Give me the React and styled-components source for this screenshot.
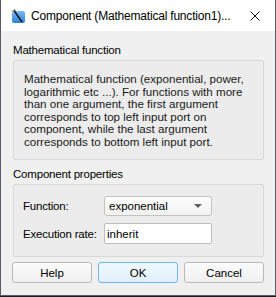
import React from "react";
import styled, { createGlobalStyle } from "styled-components";

const GlobalStyle = createGlobalStyle`
  html, body {
    margin: 0;
    padding: 0;
    background: #1b1b1f;
  }
  body {
    font-family: "Liberation Sans", Arial, sans-serif;
  }
`;

const description = [
  "Mathematical function (exponential, power,",
  "logarithmic etc ...). For functions with more",
  "than one argument, the first argument",
  "corresponds to top left input port on",
  "component, while the last argument",
  "corresponds to bottom left input port.",
];

function AppIcon() {
  return (
    <svg width="16" height="16" viewBox="0 0 16 16">
      <defs>
        <linearGradient id="iconBlue" x1="0" y1="0" x2="0" y2="1">
          <stop offset="0" stopColor="#7ab8f5" />
          <stop offset="1" stopColor="#2f7fd8" />
        </linearGradient>
      </defs>
      <rect x="2" y="3" width="13" height="12" rx="2" fill="url(#iconBlue)" />
      <path d="M1 3 L5 0.5 L6.5 2 L3 4.5 Z" fill="#b8bcc4" />
      <path d="M4 2.5 L12 14" stroke="#111" strokeWidth="1.4" />
    </svg>
  );
}

function CloseIcon() {
  return (
    <svg width="10" height="10" viewBox="0 0 10 10">
      <path d="M0.5 0.5 L9.5 9.5 M9.5 0.5 L0.5 9.5" stroke="#111" strokeWidth="1" />
    </svg>
  );
}

function App() {
  return (
    <>
      <GlobalStyle />
      <Window>
        <TitleBar>
          <AppIcon />
          <Title>Component (Mathematical function1)...</Title>
          <CloseButton>
            <CloseIcon />
          </CloseButton>
        </TitleBar>
        <Body>
          <GroupLabel $top={12}>Mathematical function</GroupLabel>
          <GroupBox $pad="12px 8px 11px 10px">
            <Description>
              {description.map((line) => (
                <Line key={line}>{line}</Line>
              ))}
            </Description>
          </GroupBox>
          <GroupLabel $top={7}>Component properties</GroupLabel>
          <GroupBox $pad="11px 50px 12px 9px">
            <Form>
              <FieldLabel>Function:</FieldLabel>
              <Combo>
                <span>exponential</span>
                <Arrow />
              </Combo>
              <FieldLabel>Execution rate:</FieldLabel>
              <Input>inherit</Input>
            </Form>
          </GroupBox>
          <ButtonRow>
            <Button>Help</Button>
            <Button $primary>OK</Button>
            <Button>Cancel</Button>
          </ButtonRow>
        </Body>
      </Window>
    </>
  );
}

const Window = styled.div`
  width: 276px;
  height: 296px;
  box-sizing: border-box;
  border: 1px solid #5a5a6a;
  border-top: none;
  display: flex;
  flex-direction: column;
  background: #f0f0f0;
`;

const TitleBar = styled.div`
  height: 31px;
  background: #ffffff;
  display: flex;
  align-items: center;
  padding-left: 9px;
  gap: 5px;
`;

const Title = styled.span`
  font-size: 12px;
  letter-spacing: -0.2px;
  color: #000;
  white-space: nowrap;
  margin-top: 1px;
`;

const CloseButton = styled.div`
  width: 32px;
  display: flex;
  justify-content: center;
  align-items: center;
  margin-left: auto;
  margin-right: 4px;
`;

const Body = styled.div`
  flex: 1;
  display: flex;
  flex-direction: column;
  padding: 0 11px 0 12px;
`;

const GroupLabel = styled.div`
  margin-top: ${(p) => p.$top}px;
  height: 15px;
  line-height: 15px;
  font-size: 11.5px;
  letter-spacing: -0.2px;
  color: #000;
  margin-bottom: 2px;
`;

const GroupBox = styled.div`
  border: 1px solid #d9d9d9;
  border-radius: 2px;
  background: #ececec;
  padding: ${(p) => p.$pad};
`;

const Description = styled.div`
  font-size: 11.6px;
  line-height: 12.5px;
  color: #1a1a1a;
`;

const Line = styled.div`
  white-space: nowrap;
`;

const Form = styled.div`
  display: grid;
  grid-template-columns: 81px 108px;
  row-gap: 7px;
  align-items: center;
`;

const FieldLabel = styled.div`
  font-size: 11.5px;
  letter-spacing: -0.2px;
  color: #000;
`;

const Combo = styled.div`
  height: 20px;
  box-sizing: border-box;
  border: 1px solid #c2c2c2;
  border-radius: 3px;
  background: linear-gradient(#fdfdfd, #f2f2f2);
  display: flex;
  align-items: center;
  justify-content: space-between;
  padding: 0 9px 0 4px;
  font-size: 11.5px;
  color: #000;
`;

const Arrow = styled.span`
  width: 0;
  height: 0;
  border-left: 4px solid transparent;
  border-right: 4px solid transparent;
  border-top: 4px solid #606060;
`;

const Input = styled.div`
  height: 21px;
  box-sizing: border-box;
  border: 1px solid #bdbdbd;
  border-radius: 2px;
  background: #ffffff;
  display: flex;
  align-items: center;
  padding-left: 2px;
  font-size: 11.5px;
  color: #000;
`;

const ButtonRow = styled.div`
  margin-top: 5px;
  margin-left: -1px;
  display: flex;
  gap: 6px;
`;

const Button = styled.div`
  width: 80px;
  height: 21px;
  box-sizing: border-box;
  border: 1px solid ${(p) => (p.$primary ? "#6fb6ea" : "#b9b9b9")};
  border-radius: 3px;
  background: ${(p) =>
    p.$primary
      ? "linear-gradient(#f0f8fe, #e1effb)"
      : "linear-gradient(#fbfbfb, #efefef)"};
  display: flex;
  align-items: center;
  justify-content: center;
  font-size: 11.5px;
  color: #000;
`;

export default App;
